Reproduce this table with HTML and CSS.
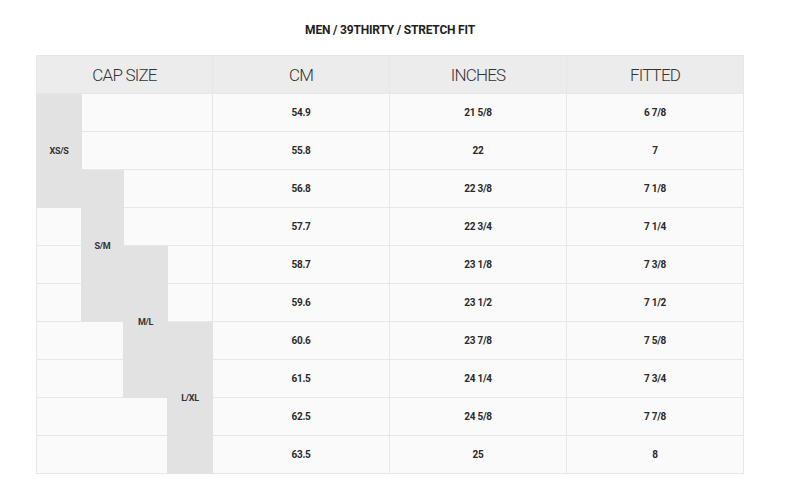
FILE: index.html
```html
<!DOCTYPE html>
<html>
<head>
<meta charset="utf-8">
<link rel="stylesheet" href="styles.css">
</head>
<body>
<div class="chart">
  <h1 class="title">MEN / 39THIRTY / STRETCH FIT</h1>
  <table class="sizes">
    <colgroup>
      <col class="sub-a"><col class="sub-b"><col class="sub-c"><col class="sub-d">
      <col class="data"><col class="data"><col class="data">
    </colgroup>
    <thead>
      <tr><th colspan="4">CAP SIZE</th><th>CM</th><th>INCHES</th><th>FITTED</th></tr>
    </thead>
    <tbody>
      <tr><td class="cap" rowspan="3">XS/S</td><td colspan="3"></td><td>54.9</td><td>21 5/8</td><td>6 7/8</td></tr>
      <tr><td colspan="3"></td><td>55.8</td><td>22</td><td>7</td></tr>
      <tr><td class="cap" rowspan="4">S/M</td><td colspan="2"></td><td>56.8</td><td>22 3/8</td><td>7 1/8</td></tr>
      <tr><td></td><td colspan="2"></td><td>57.7</td><td>22 3/4</td><td>7 1/4</td></tr>
      <tr><td></td><td class="cap" rowspan="4">M/L</td><td></td><td>58.7</td><td>23 1/8</td><td>7 3/8</td></tr>
      <tr><td></td><td></td><td>59.6</td><td>23 1/2</td><td>7 1/2</td></tr>
      <tr><td colspan="2"></td><td class="cap" rowspan="4">L/XL</td><td>60.6</td><td>23 7/8</td><td>7 5/8</td></tr>
      <tr><td colspan="2"></td><td>61.5</td><td>24 1/4</td><td>7 3/4</td></tr>
      <tr><td colspan="3"></td><td>62.5</td><td>24 5/8</td><td>7 7/8</td></tr>
      <tr><td colspan="3"></td><td>63.5</td><td>25</td><td>8</td></tr>
    </tbody>
  </table>
</div>
</body>
</html>
```

FILE: styles.css
```css
html, body {
  margin: 0;
  padding: 0;
  background: #ffffff;
}

body {
  font-family: Roboto, "Liberation Sans", sans-serif;
  color: #222;
}

.chart {
  width: 708px;
  margin-left: 36px;
  padding-top: 23px;
}

.title {
  margin: 0 0 23px;
  height: 9px;
  line-height: 14px;
  font-size: 12px;
  font-weight: 700;
  letter-spacing: -0.2px;
  text-align: center;
  color: #222;
}

.sizes {
  width: 708px;
  border-collapse: collapse;
  table-layout: fixed;
}

.sub-a { width: 45px; }
.sub-b { width: 42px; }
.sub-c { width: 44px; }
.sub-d { width: 45px; }
.data { width: 177px; }

.sizes th,
.sizes td {
  height: 37px;
  padding: 0;
  border: 1px solid #e7e7e7;
  text-align: center;
  vertical-align: middle;
}

.sizes th {
  background: #ececec;
  font-size: 17px;
  font-weight: 300;
  letter-spacing: -0.8px;
  color: #333;
}

.sizes td {
  background: #fafafa;
  font-size: 10px;
  font-weight: 700;
  letter-spacing: -0.25px;
  color: #2a2a2a;
}

.sizes td.cap {
  background: #e2e2e2;
  border-color: #e2e2e2;
  font-size: 9px;
  letter-spacing: -0.3px;
  color: #333;
}
```
